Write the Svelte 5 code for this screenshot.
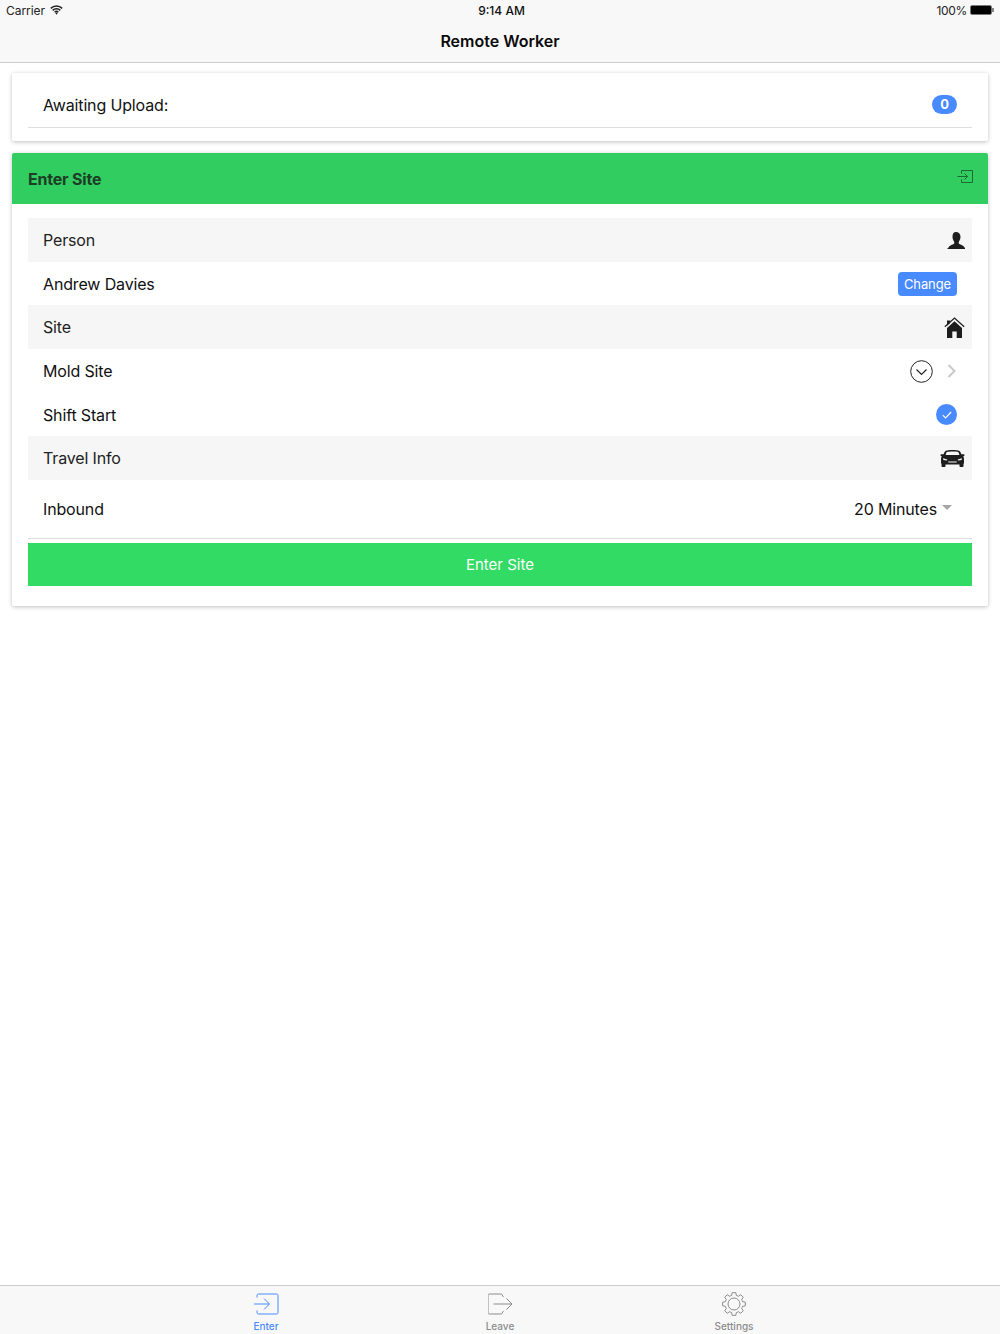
<script>
	const tabs = [
		{ label: 'Enter', icon: 'enter', active: true },
		{ label: 'Leave', icon: 'leave', active: false },
		{ label: 'Settings', icon: 'settings', active: false }
	];

	// eight flat-topped teeth
	const gearPoints = Array.from({ length: 8 }, (_, i) => {
		const a = i * 45 - 90;
		return [
			[a - 15, 8.9],
			[a - 9, 11.5],
			[a + 9, 11.5],
			[a + 15, 8.9]
		]
			.map(([d, r]) => {
				const t = (d * Math.PI) / 180;
				return `${(12 + r * Math.cos(t)).toFixed(2)},${(12 + r * Math.sin(t)).toFixed(2)}`;
			})
			.join(' ');
	}).join(' ');
</script>

<div class="page">
	<header class="nav">
		<div class="status">
			<span class="carrier">
				Carrier
				<svg width="13" height="10" viewBox="0 0 13 10">
					<path d="M.8 3.400a8.200 8.200 0 0 1 11.400 0M2.700 5.400a5.400 5.400 0 0 1 7.600 0M4.700 7.200a2.600 2.600 0 0 1 3.600 0" fill="none" stroke="#222" stroke-width="1.500" />
					<path d="M5.400 8.300 6.500 7.500l1.100.8-1.100 1.400z" fill="#222" />
				</svg>
			</span>
			<span class="time">9:14 AM</span>
			<span class="battery">
				100%
				<svg width="24" height="10" viewBox="0 0 24 10">
					<rect x="0.5" y="0.5" width="21" height="9" rx="1.600" fill="#000" stroke="#777" />
					<rect x="22.300" y="3" width="1.400" height="4" fill="#555" />
				</svg>
			</span>
		</div>
		<h1>Remote Worker</h1>
	</header>

	<main>
		<section class="card upload">
			<div class="upload-row">
				<span>Awaiting Upload:</span>
				<span class="badge">0</span>
			</div>
		</section>

		<section class="card">
			<div class="card-head">
				<h2>Enter Site</h2>
				<svg width="16" height="14" viewBox="0 0 16 14" fill="none" stroke="#1a6b35">
					<path d="M4.500 3.500V.5h11v12h-11v-3M.5 6.500h10M7.500 3.500l3 3-3 3" />
				</svg>
			</div>

			<div class="card-body">
				<div class="row label-row h44">
					<span>Person</span>
					<svg width="18" height="17" viewBox="0 0 18 17" fill="#1e1e1e">
						<path d="M9 0c2.500 0 4.500 1.800 4.500 4.800 0 2-.8 3.700-1.500 4.800-.6 1-.3 2.200.8 2.700 1.700.8 3.900 1.400 4.700 3.300l1.500 1.400H0l1.500-1.400c.8-1.900 3-2.500 4.700-3.300 1.100-.5 1.400-1.700.8-2.700C6.300 8.500 5.500 6.800 5.500 4.800 5.500 1.800 6.500 0 9 0z" />
					</svg>
				</div>
				<div class="row h43">
					<span>Andrew Davies</span>
					<button class="change">Change</button>
				</div>
				<div class="row label-row h44">
					<span>Site</span>
					<svg width="21" height="21" viewBox="0 0 21 21">
						<path d="M.8 9.800 10.500 1l9.700 8.800" fill="none" stroke="#1e1e1e" stroke-width="1.200" />
						<path d="M3 3.500h3.200v2.400L3 8.800z" fill="#1e1e1e" />
						<path d="M3 11 10.500 4.200 18 11V21h-5.300v-6.500H8.300V21H3z" fill="#1e1e1e" />
					</svg>
				</div>
				<div class="row h44">
					<span>Mold Site</span>
					<span class="mold-icons">
						<svg width="23" height="23" viewBox="0 0 23 23" fill="none" stroke="#222">
							<circle cx="11.500" cy="11.500" r="10.800" />
							<path d="M6.500 9.500l5 5 5-5" stroke-width="1.200" />
						</svg>
						<svg width="9" height="14" viewBox="0 0 9 14" fill="none" stroke="#c7c7cc" stroke-width="2">
							<path d="M1.500 1l6 6-6 6" />
						</svg>
					</span>
				</div>
				<div class="row h43">
					<span>Shift Start</span>
					<span class="check">
						<svg width="10" height="8" viewBox="0 0 10 8" fill="none" stroke="#fff" stroke-width="1.100">
							<path d="M.8 4.200 3.500 7 9.200 1" />
						</svg>
					</span>
				</div>
				<div class="row label-row h44">
					<span>Travel Info</span>
					<svg width="25" height="18" viewBox="0 0 25 18" fill="#1e1e1e">
						<path fill-rule="evenodd" d="M5.500 2C7 1.200 9.500 1 12.500 1s5.500.2 7 1c.8.500 1.300 1.700 1.900 3.200h2.300c.6 0 .8.500.8 1s-.5 1-1.400 1.100c.6.800.9 1.600.9 2.700v4.500h-.5V17c0 .6-.4 1-1 1h-2c-.6 0-1-.4-1-1v-1.500H5.500V17c0 .6-.4 1-1 1h-2c-.6 0-1-.4-1-1v-2.500H1V10c0-1.100.3-1.900.9-2.700C1 7.200.5 6.700.5 6.200s.2-1 .8-1h2.300c.6-1.500 1.100-2.700 1.900-3.200zM6.500 3.300 5.600 6h13.800l-.9-2.700c-1.500-.6-3.500-.7-6-.7s-4.500.1-6 .7zM3 9.300l.4 1.700 3.600.6.300-1.200zM22 9.300l-4.300 1.100.3 1.200 3.600-.6zM8 12.500l.5 1h8l.5-1z" />
					</svg>
				</div>
				<div class="row inbound">
					<span>Inbound</span>
					<span class="select">20 Minutes <i class="caret"></i></span>
				</div>
				<button class="enter">Enter Site</button>
			</div>
		</section>
	</main>

	<nav class="tabbar">
		{#each tabs as tab}
			<div class="tab" class:active={tab.active}>
				{#if tab.icon === 'enter'}
					<svg width="25" height="24" viewBox="0.500 -1.500 25 24" fill="none" stroke="currentColor">
						<path d="M3.500 4V2Q3.500 .5 5 .5H23Q24.500 .5 24.500 2V19Q24.500 20.500 23 20.500H5Q3.500 20.500 3.500 19V17M0 10.500H15.500M10.500 5l5.500 5.500-5.500 5.500" />
					</svg>
				{:else if tab.icon === 'leave'}
					<svg width="25" height="24" viewBox="0.500 -1.500 25 24" fill="none" stroke="currentColor">
						<path d="M16 3.500 14 .5H2Q.5 .5 .5 2V19Q.5 20.500 2 20.500H14L16 17.500M6 10.500H24M19 5l5.500 5.500-5.500 5.500" />
					</svg>
				{:else}
					<svg width="24" height="24" viewBox="0 0 24 24" fill="none" stroke="currentColor">
						<polygon points={gearPoints} stroke-linejoin="round" />
						<circle cx="12" cy="12" r="6" />
					</svg>
				{/if}
				<span>{tab.label}</span>
			</div>
		{/each}
	</nav>
</div>

<style>
	:global(body) {
		background: #fff;
		font-family: Inter, "Liberation Sans", sans-serif;
		color: #111;
	}

	.page {
		display: flex;
		flex-direction: column;
		height: 1334px;
		overflow: hidden;
	}

	.nav {
		height: 62px;
		background: #f8f8f8;
		border-bottom: 1px solid #ccc;
		flex: none;
	}

	.status {
		display: grid;
		grid-template-columns: 1fr auto 1fr;
		align-items: center;
		height: 20px;
		padding: 0 6px;
		font-size: 12px;
		color: #222;
	}

	.carrier {
		display: flex;
		align-items: center;
		gap: 5px;
		letter-spacing: -0.05px;
	}

	.time {
		margin-left: 3px;
		font-weight: 500;
		color: #111;
	}

	.battery {
		display: flex;
		align-items: center;
		justify-content: flex-end;
		gap: 3px;
		letter-spacing: -0.3px;
	}

	h1 {
		margin: 0;
		padding-top: 6px;
		font-size: 16px;
		line-height: 30px;
		font-weight: 600;
		text-align: center;
		color: #0a0a0a;
	}

	main {
		flex: 1;
		display: flex;
		flex-direction: column;
		gap: 12px;
		padding: 10px 12px 0;
	}

	.card {
		background: #fff;
		border-radius: 2px;
		box-shadow: 0 1px 4px rgba(0, 0, 0, 0.25);
	}

	.upload {
		height: 68px;
		padding: 0 16px;
	}

	.upload-row {
		display: flex;
		align-items: center;
		justify-content: space-between;
		box-sizing: border-box;
		height: 55px;
		padding: 10px 15px 0;
		border-bottom: 1px solid #dedede;
		font-size: 16px;
		letter-spacing: -0.15px;
	}

	.badge {
		width: 25px;
		height: 19px;
		margin-top: -2px;
		border-radius: 10px;
		background: #488aff;
		color: #fff;
		font-size: 13px;
		font-weight: 700;
		line-height: 19px;
		text-align: center;
	}

	.card-head {
		display: flex;
		align-items: center;
		justify-content: space-between;
		height: 51px;
		padding: 0 15px 0 16px;
		border-radius: 2px 2px 0 0;
		background: #32cd60;
	}

	h2 {
		margin: 0;
		font-size: 16px;
		letter-spacing: -0.2px;
		font-weight: 700;
		color: #1c3d26;
	}

	.card-head svg {
		margin-top: -3px;
	}

	.card-body {
		display: flex;
		flex-direction: column;
		padding: 14px 16px 20px;
	}

	.row {
		display: flex;
		align-items: center;
		justify-content: space-between;
		padding: 0 15px;
		font-size: 16px;
		letter-spacing: -0.15px;
	}

	.h44 {
		height: 44px;
	}

	.h43 {
		height: 43px;
	}

	.label-row {
		background: #f6f6f6;
		color: #222;
		padding-right: 7px;
	}

	.change {
		width: 59px;
		height: 24px;
		padding: 0;
		border: 0;
		border-radius: 4px;
		background: #488aff;
		color: #fff;
		font: inherit;
		font-size: 13px;
		letter-spacing: -0.1px;
	}

	.mold-icons {
		display: flex;
		align-items: center;
		gap: 14px;
		margin-right: 1px;
	}

	.check {
		display: flex;
		align-items: center;
		justify-content: center;
		width: 21px;
		height: 21px;
		border-radius: 50%;
		background: #488aff;
	}

	.inbound {
		box-sizing: border-box;
		height: 59px;
		padding-right: 20px;
		border-bottom: 1px solid #dedede;
	}

	.select {
		display: flex;
		align-items: center;
		gap: 5px;
	}

	.caret {
		width: 0;
		height: 0;
		margin-top: -3px;
		border-left: 5px solid transparent;
		border-right: 5px solid transparent;
		border-top: 5px solid #a6a6a6;
	}

	.enter {
		height: 43px;
		margin-top: 4px;
		border: 0;
		background: #32db64;
		color: #fff;
		font: inherit;
		font-size: 15px;
	}

	.tabbar {
		flex: none;
		display: grid;
		grid-template-columns: repeat(3, 234px);
		justify-content: center;
		height: 49px;
		background: #f8f8f8;
		border-top: 1px solid #ccc;
		box-sizing: border-box;
	}

	.tab {
		display: flex;
		flex-direction: column;
		align-items: center;
		padding-top: 6px;
		color: #8c8c8c;
	}

	.tab.active {
		color: #488aff;
	}

	.tab span {
		margin-top: 4px;
		font-size: 10px;
		font-weight: 500;
		line-height: 13px;
	}
</style>
